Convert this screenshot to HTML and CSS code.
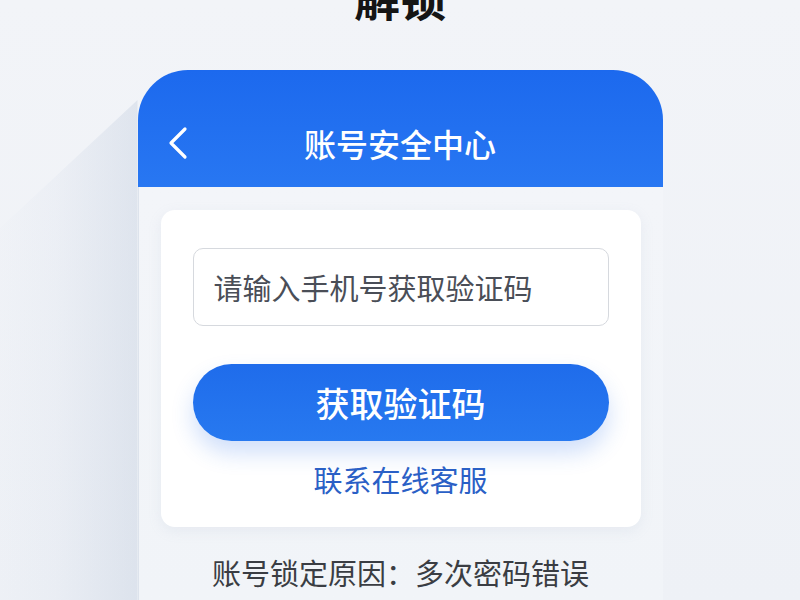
FILE: index.html
```html
<!DOCTYPE html>
<html lang="zh-CN">
<head>
  <meta charset="UTF-8">
  <title>解锁</title>
  <link rel="stylesheet" href="styles.css">
</head>
<body>
  <h1 class="page-title">解锁</h1>

  <div class="phone">
    <div class="phone-header">
      <span class="back">
        <svg width="22" height="34" viewBox="0 0 22 34">
          <path d="M18 3 L4 17 L18 31" fill="none" stroke="#fff" stroke-width="3.2" stroke-linecap="round" stroke-linejoin="round"/>
        </svg>
      </span>
      <span class="header-title">账号安全中心</span>
    </div>

    <div class="phone-body">
      <div class="card">
        <input class="phone-input" type="text" placeholder="请输入手机号获取验证码">
        <button class="btn-code">获取验证码</button>
        <a class="service-link" href="#">联系在线客服</a>
      </div>
      <p class="lock-reason">账号锁定原因：多次密码错误</p>
    </div>
  </div>
</body>
</html>
```

FILE: styles.css
```css
html, body {
  height: 100%;
}

body {
  margin: 0;
  overflow: hidden;
  font-family: "Noto Sans CJK SC", "Noto Sans", sans-serif;
  background: linear-gradient(180deg, #f2f4f8 0%, #eef1f6 100%);
}

.page-title {
  margin: -27px 0 0;
  height: 97px;
  font-size: 46px;
  line-height: 46px;
  font-weight: 700;
  text-align: center;
  color: #151515;
}

.phone {
  position: relative;
  width: 525px;
  margin: 0 auto;
  height: 530px;
  display: flex;
  flex-direction: column;
}

/* soft long shadow falling to the lower left */
.phone::before {
  content: "";
  position: absolute;
  right: 100%;
  top: 30px;
  bottom: 0;
  width: 150px;
  background: linear-gradient(270deg, rgba(175, 190, 212, 0.28) 0%, rgba(200, 210, 228, 0.12) 55%, rgba(230, 235, 243, 0) 100%);
  clip-path: polygon(100% 0, 100% 100%, 0 100%, 0 140px);
}

.phone-header {
  height: 117px;
  border-radius: 50px 50px 0 0;
  background: linear-gradient(180deg, #1c69ee 0%, #2877f2 100%);
  display: flex;
  align-items: center;
  padding-top: 28px;
  box-sizing: border-box;
  position: relative;
}

.back {
  display: flex;
  margin-left: 29px;
}

.header-title {
  position: absolute;
  left: 0;
  right: 0;
  top: 53px;
  text-align: center;
  font-size: 32px;
  line-height: 40px;
  font-weight: 500;
  color: #fff;
  pointer-events: none;
}

.phone-body {
  flex: 1;
  background: linear-gradient(180deg, #f3f5f9 0%, #f1f4f8 100%);
  border-left: 1px solid #dde3ec;
  padding: 23px 22px 0;
}

.card {
  background: #fff;
  border-radius: 14px;
  box-shadow: 0 4px 14px rgba(150, 165, 190, 0.12);
  padding: 38px 32px 28px;
  display: flex;
  flex-direction: column;
  align-items: center;
}

.phone-input {
  width: 100%;
  height: 78px;
  box-sizing: border-box;
  border: 1.5px solid #d6d9de;
  border-radius: 10px;
  padding: 0 20px;
  font-family: inherit;
  font-size: 29px;
  color: #333;
  outline: none;
}

.phone-input::placeholder {
  color: #4a4e57;
}

.btn-code {
  width: 100%;
  height: 77px;
  margin-top: 38px;
  border: none;
  border-radius: 39px;
  background: linear-gradient(180deg, #1f6ceb 0%, #2779f0 100%);
  box-shadow: 0 12px 22px rgba(40, 110, 230, 0.22);
  color: #fff;
  font-family: inherit;
  font-size: 34px;
  font-weight: 500;
  cursor: pointer;
}

.service-link {
  margin-top: 18px;
  font-size: 29px;
  line-height: 40px;
  color: #2a60c6;
  text-decoration: none;
}

.lock-reason {
  margin: 25px 0 0;
  text-align: center;
  font-size: 29px;
  line-height: 40px;
  color: #3a3d43;
}
```
